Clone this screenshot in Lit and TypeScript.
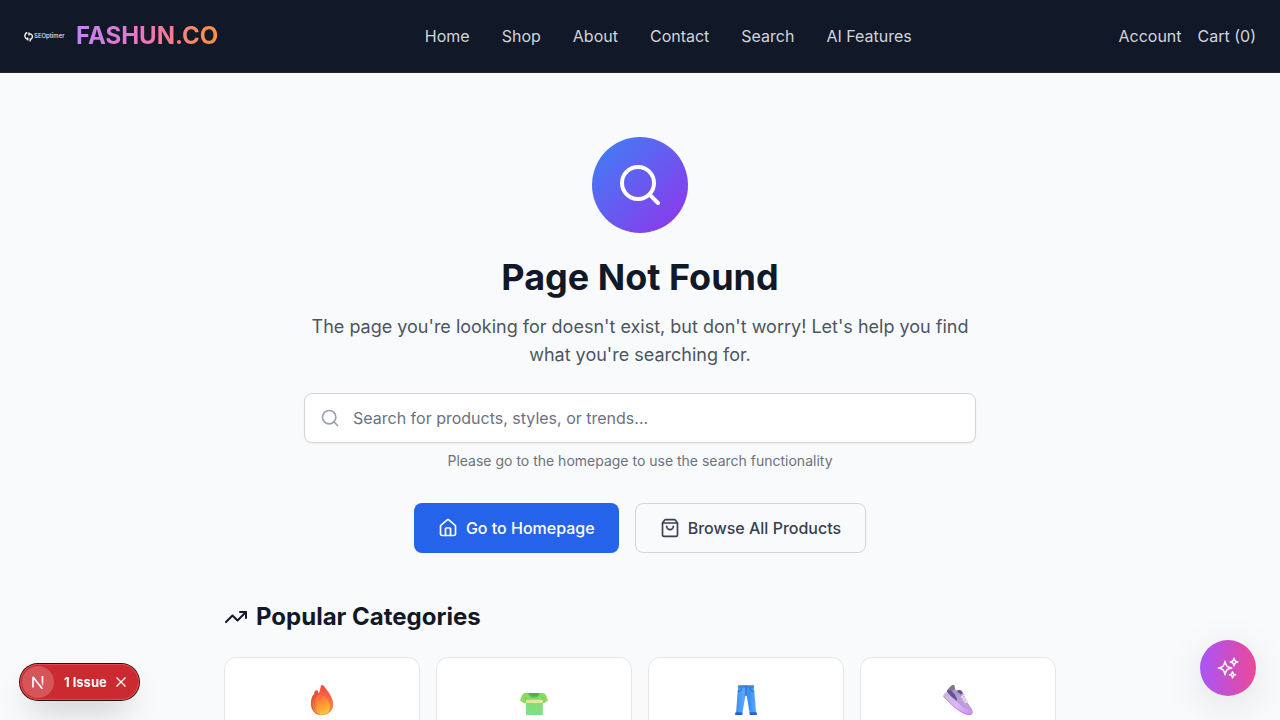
import { LitElement, html, css, svg } from "lit";
import { customElement } from "lit/decorators.js";

const searchIcon = html`<svg class="stroke" viewBox="0 0 24 24" aria-hidden="true"><circle cx="11" cy="11" r="8"/><path d="m21 21-4.3-4.3"/></svg>`;

const fire = svg`
  <defs>
    <linearGradient id="fireA" x1="0.6" y1="0" x2="0.4" y2="1"><stop offset="0" stop-color="#f4403f"/><stop offset="0.5" stop-color="#fb7442"/><stop offset="1" stop-color="#f8903f"/></linearGradient>
    <linearGradient id="fireB" x1="0.3" y1="0" x2="0.6" y2="1"><stop offset="0" stop-color="#fb6a3a"/><stop offset="1" stop-color="#ffca30"/></linearGradient>
    <linearGradient id="fireC" x1="0" y1="0" x2="0" y2="1"><stop offset="0" stop-color="#ef4b3a"/><stop offset="1" stop-color="#c8643a"/></linearGradient>
  </defs>
  <path fill="url(#fireC)" d="M11.6 6.500C9.200 5.800 8.200 8 8.100 10 5.800 12 4.500 16 5 21c.4 5 3.600 9 8.500 10L17 20z"/>
  <path fill="url(#fireA)" d="M16.300 1c.7 0 1.300.8 2 1.800C22.500 8 27.200 13.500 27.200 20.500 27.200 26.800 22.300 31 16.500 31 10 31 6.500 26.500 6.700 20.500 6.900 15 11.500 12.500 13.500 7.500c.8-2 1-4.500 1.800-6 .3-.4.6-.5 1-.5z"/>
  <path fill="none" stroke="#dd5738" stroke-width=".9" d="M12.500 9.500C8.500 14 7.500 19 8.500 25"/>
  <path fill="url(#fireB)" d="M17.500 11.500c3.500 3 6.500 6.500 6.500 11 0 5-3 8-7.500 8-4.200 0-6.500-3.300-6.200-7.500.3-4.700 4.700-8 7.200-11.500z"/>`;

const shirt = svg`
  <defs>
    <linearGradient id="shirtA" x1="0" y1="0" x2="0" y2="1"><stop offset="0" stop-color="#8bd85c"/><stop offset="1" stop-color="#7fe08b"/></linearGradient>
    <linearGradient id="shirtB" x1="0" y1="0" x2="1" y2="0"><stop offset="0" stop-color="#e9dda0"/><stop offset="1" stop-color="#e0ee9f"/></linearGradient>
  </defs>
  <path fill="#8ed85e" d="M8.500 9C5.800 9 4.800 9.500 4 11.300L2 16.500l4 2.700h2l1-4zM23.500 9c2.700 0 3.700.5 4.500 2.300l2 5.200-4 2.700h-2l-1-4z"/>
  <path fill="url(#shirtA)" d="M8 9h16l.8 8v14H8V17L6.500 15z"/>
  <path fill="none" stroke="#70bd50" stroke-width=".6" d="M8 13v6M24.500 13v6"/>
  <path fill="url(#shirtB)" d="M8 15.800h16.800v3.200H8z"/>
  <path fill="#7a9a34" d="M11.500 9h9c0 2.300-2 3.500-4.500 3.500S11.500 11.300 11.500 9z"/>
  <path fill="none" stroke="#34c768" stroke-width="1.300" d="M11 9c.2 3 2.200 4.200 5 4.200s4.800-1.200 5-4.200"/>`;

const jeans = svg`
  <defs><linearGradient id="jeansA" x1="0" y1="0" x2="1" y2="0"><stop offset="0" stop-color="#3d8cf0"/><stop offset=".35" stop-color="#55a9fb"/><stop offset=".65" stop-color="#3a8df0"/><stop offset="1" stop-color="#58acfb"/></linearGradient></defs>
  <path fill="url(#jeansA)" d="M8.500 1h15l.8 6 2 23h-6.500L16.700 12h-1.400l-3 18H6L7.700 7z"/>
  <path fill="#2d72d2" d="M8.500 1.400h15l.3 2.200H8.200z"/>
  <path fill="#4ba5ef" d="M8.700 1h14.600v1.500H8.700z"/>
  <path fill="none" stroke="#245cc5" stroke-width=".9" d="M8 7.600c2.800-.2 3.300-1.400 3.500-3.500M24 7.600c-2.800-.2-3.300-1.400-3.500-3.500M16 4v7.500"/>
  <circle cx="16" cy="2.500" r=".6" fill="#17499b"/>
  <path fill="#255fd0" d="M5.500 28.200l7 .4-.3 2.400H5.800c-.7 0-.8-.5-.7-1zM19.500 28.600l7-.4.4 1.800c.1.500 0 1-.7 1h-6.400z"/>`;

const sneaker = svg`
  <defs>
    <linearGradient id="shoeA" x1="0" y1="0" x2="1" y2="1"><stop offset="0" stop-color="#9b88aa"/><stop offset=".5" stop-color="#b7a2d1"/><stop offset="1" stop-color="#c49be4"/></linearGradient>
    <linearGradient id="shoeB" x1="0" y1="0" x2="1" y2="1"><stop offset="0" stop-color="#c3b5ce"/><stop offset=".5" stop-color="#deb9fa"/><stop offset="1" stop-color="#c68df1"/></linearGradient>
  </defs>
  <path fill="url(#shoeA)" d="M5.500 5.500 10 1.300c1-.8 2.300-.2 2.500.8.200 1.500.3 3.200 1.300 4 1.300 1.200 3-.5 5 .3 1.500.6 2 2 2.700 3.600l4.200 9 4 5.500c1 1.500 1.300 3.500.2 4.700-2 1.500-5 .8-7.400-.7L4 11z"/>
  <path fill="#81758b" d="M6.500 4.600 10 1.300c1-.8 2.300-.2 2.500.8l.5 3-3.500 2z"/>
  <path fill="#65519b" d="M5.200 6.200c2-1 4.300.3 6 2.500 2 2.600 4 4.500 3.800 8.300L5 9.500z"/>
  <path fill="#6550a4" d="M15 6.800c2-1.500 5-.6 5.700 2.400l-1.700 1.200c-1.500-1-3.200-1.500-4-3.600z"/>
  <path fill="none" stroke="#eadcf7" stroke-width="1.300" stroke-linecap="round" d="m19.500 13 2.700-2M21 16l3-1.800M23 18.800l2.800-1.500M20 13.500l2 .5M22 17l1.800.2"/>
  <path fill="url(#shoeB)" d="M4.500 7.500c1.500 1 3.500 4 7 7.300 5 4.700 10.500 11 18 12.200.7.100 1.300.300 1.300.9 0 2.500-2.300 3.300-5.300 2.900C18 29.500 9.500 21 2 13.500c-.9-1-.9-2-.1-2.900z"/>
  <path fill="none" stroke="#b87be7" stroke-width=".8" d="M1.500 12.500C9 20 17 28.500 25 30.300c2.500.4 4.500 0 5.300-1.300"/>`;

const categories = [
  { name: "Trending", art: fire },
  { name: "Tops", art: shirt },
  { name: "Bottoms", art: jeans },
  { name: "Shoes", art: sneaker },
];

@customElement("app-root")
export class AppRoot extends LitElement {
  static styles = css`
    :host { display: block; min-height: 100vh; background: #f9fafb; color: #111827; font-family: Inter, "Liberation Sans", sans-serif; font-size: 16px; line-height: 24px; }
    * { box-sizing: border-box; }
    a { color: inherit; text-decoration: none; }
    h1, h2, p { margin: 0; }
    svg { display: block; flex: none; }
    .stroke { width: 20px; height: 20px; fill: none; stroke: currentColor; stroke-width: 2; stroke-linecap: round; stroke-linejoin: round; }
    header { display: flex; align-items: center; justify-content: space-between; padding: 20px 24px; background: #111827; color: #d1d5db; border-bottom: 1px solid #1f2937; }
    .brand { display: flex; align-items: center; gap: 12px; }
    .logo { display: flex; align-items: center; gap: 1px; width: 40px; color: #e5e7eb; font: 500 6px/12px Inter, sans-serif; }
    .logo svg { width: 9px; height: 11px; }
    .name { font-size: 24px; line-height: 32px; font-weight: 700; color: transparent; background: linear-gradient(to right, #c084fc, #f472b6, #fb923c); -webkit-background-clip: text; background-clip: text; }
    nav { display: flex; gap: 32px; }
    .account { display: flex; gap: 16px; }
    main { max-width: 896px; margin: 0 auto; padding: 64px 32px; }
    .hero { display: flex; flex-direction: column; align-items: center; text-align: center; }
    .disc { display: grid; place-items: center; width: 96px; height: 96px; border-radius: 50%; color: #fff; background: linear-gradient(to bottom right, #3b82f6, #9333ea); margin-bottom: 24px; }
    .disc .stroke { width: 48px; height: 48px; }
    h1 { font-size: 36px; line-height: 40px; font-weight: 700; margin-bottom: 16px; }
    .lead { max-width: 672px; font-size: 18px; line-height: 28px; color: #4b5563; margin-bottom: 24px; }
    .search { position: relative; width: 100%; max-width: 672px; color: #9ca3af; }
    .search .stroke { position: absolute; left: 16px; top: 15px; }
    input { display: block; width: 100%; height: 50px; padding: 12px 16px 12px 48px; font: inherit; color: #111827; background: #fff; border: 1px solid #d1d5db; border-radius: 8px; box-shadow: 0 1px 2px rgba(0, 0, 0, 0.05); }
    input::placeholder { color: #6b7280; opacity: 1; }
    .hint { margin-top: 8px; font-size: 14px; line-height: 20px; color: #6b7280; }
    .actions { display: flex; gap: 16px; margin-top: 32px; }
    .button { display: flex; align-items: center; gap: 8px; padding: 12px 24px; border-radius: 8px; font-weight: 500; }
    .primary { background: #2563eb; color: #fff; }
    .secondary { border: 1px solid #d1d5db; color: #374151; }
    h2 { display: flex; align-items: center; gap: 8px; margin: 48px 0 24px; font-size: 24px; line-height: 32px; font-weight: 700; }
    h2 .stroke { width: 24px; height: 24px; }
    .cards { display: grid; grid-template-columns: repeat(4, 1fr); gap: 16px; }
    .card { display: flex; justify-content: center; padding: 26px 24px; background: #fff; border: 1px solid #e5e7eb; border-radius: 12px; }
    .card svg { width: 32px; height: 32px; }
    button { font: inherit; border: 0; padding: 0; color: #fff; cursor: pointer; }
    .assistant { position: fixed; right: 24px; bottom: 24px; display: grid; place-items: center; width: 56px; height: 56px; border-radius: 50%; background: linear-gradient(to right, #a855f7, #ec4899); box-shadow: 0 10px 40px rgba(0, 0, 0, 0.1); }
    .assistant svg { width: 24px; height: 24px; fill: none; stroke: #fff; stroke-width: 1.5; stroke-linecap: round; stroke-linejoin: round; }
    .issues { position: fixed; left: 20px; bottom: 20px; display: flex; align-items: center; height: 36px; padding: 2px; border-radius: 18px; color: #fff; background: #ca2a30; box-shadow: 0 0 0 1px #171717, inset 0 0 0 1px #e5484d, 0 16px 32px -8px rgba(0, 0, 0, 0.24); }
    .mark { display: grid; place-items: center; width: 32px; height: 32px; border-radius: 50%; background: #d55559; }
    .mark svg { width: 14px; height: 14px; }
    .count { background: none; margin-left: 10px; font-size: 13px; line-height: 16px; font-weight: 700; }
    .close { background: none; margin: 0 10px 0 8px; }
    .close svg { width: 12px; height: 12px; }
  `;

  render() {
    return html`
      <header>
        <a class="brand" href="#">
          <span class="logo">
            <svg viewBox="0 0 9 11" fill="none" stroke="#fff" stroke-width="1.300" aria-hidden="true"><path d="M3.300 1.500C.8 2.200.2 5 1.600 7c.7.9 1.700 1.200 2.600 1.100M5.500 2.800c1.700-.1 3 1.200 2.900 3-.1 1.700-1.200 2.700-2.700 3.200M3.800 6.500v3M4.900 1.500v2.900M6.200 7.500v3"/></svg>
            <span>SEOptimer</span>
          </span>
          <span class="name">FASHUN.CO</span>
        </a>
        <nav>
          ${["Home", "Shop", "About", "Contact", "Search", "AI Features"].map((t) => html`<a href="#">${t}</a>`)}
        </nav>
        <div class="account"><a href="#">Account</a><a href="#">Cart (0)</a></div>
      </header>
      <main>
        <section class="hero">
          <div class="disc">${searchIcon}</div>
          <h1>Page Not Found</h1>
          <p class="lead">The page you're looking for doesn't exist, but don't worry! Let's help you find what you're searching for.</p>
          <div class="search">
            <input type="text" aria-label="Search" aria-describedby="hint" placeholder="Search for products, styles, or trends..." />
            ${searchIcon}
          </div>
          <p class="hint" id="hint">Please go to the homepage to use the search functionality</p>
          <div class="actions">
            <a class="button primary" href="#">
              <svg class="stroke" viewBox="0 0 24 24" aria-hidden="true"><path d="M15 21v-8a1 1 0 0 0-1-1h-4a1 1 0 0 0-1 1v8"/><path d="M3 10a2 2 0 0 1 .709-1.528l7-5.999a2 2 0 0 1 2.582 0l7 5.999A2 2 0 0 1 21 10v9a2 2 0 0 1-2 2H5a2 2 0 0 1-2-2z"/></svg>
              Go to Homepage
            </a>
            <a class="button secondary" href="#">
              <svg class="stroke" viewBox="0 0 24 24" aria-hidden="true"><path d="M16 10a4 4 0 0 1-8 0"/><path d="M3.103 6.034h17.794"/><path d="M3.400 5.467a2 2 0 0 0-.4 1.200V20a2 2 0 0 0 2 2h14a2 2 0 0 0 2-2V6.667a2 2 0 0 0-.4-1.200l-2-2.667A2 2 0 0 0 17 2H7a2 2 0 0 0-1.600.8z"/></svg>
              Browse All Products
            </a>
          </div>
        </section>
        <section>
          <h2><svg class="stroke" viewBox="0 0 24 24" aria-hidden="true"><path d="M16 7h6v6"/><path d="m22 7-8.500 8.500-5-5L2 17"/></svg>Popular Categories</h2>
          <div class="cards">
            ${categories.map((c) => html`<a class="card" href="#" aria-label=${c.name}><svg viewBox="0 0 32 32" aria-hidden="true">${c.art}</svg></a>`)}
          </div>
        </section>
      </main>
      <button class="assistant" aria-label="AI assistant">
        <svg viewBox="0 0 24 24" aria-hidden="true"><path d="M9.813 15.904L9 18.750l-.813-2.846a4.500 4.500 0 00-3.090-3.090L2.250 12l2.846-.813a4.500 4.500 0 003.090-3.090L9 5.250l.813 2.846a4.500 4.500 0 003.090 3.090L15.750 12l-2.846.813a4.500 4.500 0 00-3.090 3.090zM18.259 8.715L18 9.750l-.259-1.035a3.375 3.375 0 00-2.455-2.456L14.250 6l1.036-.259a3.375 3.375 0 002.455-2.456L18 2.250l.259 1.035a3.375 3.375 0 002.456 2.456L21.750 6l-1.035.259a3.375 3.375 0 00-2.456 2.456zM16.894 20.567L16.500 21.750l-.394-1.183a2.250 2.250 0 00-1.423-1.423L13.500 18.750l1.183-.394a2.250 2.250 0 001.423-1.423l.394-1.183.394 1.183a2.250 2.250 0 001.423 1.423l1.183.394-1.183.394a2.250 2.250 0 00-1.423 1.423z"/></svg>
      </button>
      <div class="issues">
        <span class="mark">
          <svg viewBox="0 0 14 14" fill="none" stroke-width="1.700" aria-hidden="true">
            <defs><linearGradient id="fade" gradientUnits="userSpaceOnUse" x1="0" y1="1" x2="0" y2="12"><stop offset=".5" stop-color="#fff"/><stop offset="1" stop-color="#fff" stop-opacity="0"/></linearGradient></defs>
            <path stroke="#fff" stroke-linejoin="bevel" d="M2 12.500V2l9.500 12"/><path stroke="url(#fade)" d="M11.500 1v10.500"/>
          </svg>
        </span>
        <button class="count">1 Issue</button>
        <button class="close" aria-label="Close"><svg viewBox="0 0 12 12" fill="none" stroke="#fff" stroke-width="1.300" aria-hidden="true"><path d="m1.500 1.500 9 9m0-9-9 9"/></svg></button>
      </div>
    `;
  }
}
